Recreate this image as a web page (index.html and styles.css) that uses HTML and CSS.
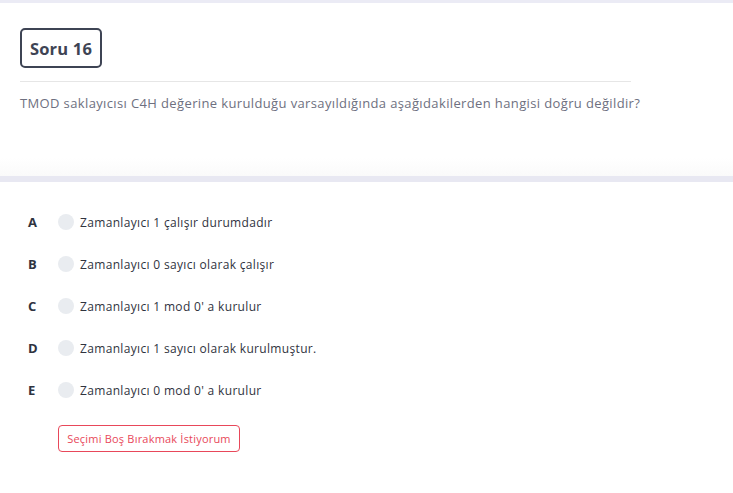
FILE: index.html
```html
<!DOCTYPE html>
<html lang="tr">
<head>
<meta charset="utf-8">
<link rel="stylesheet" href="styles.css">
</head>
<body>
<div class="topbar"></div>
<section class="question">
  <div class="badge">Soru 16</div>
  <div class="divider"></div>
  <p class="qtext">TMOD saklayıcısı C4H değerine kurulduğu varsayıldığında aşağıdakilerden hangisi doğru değildir?</p>
</section>
<div class="band"></div>
<section class="options">
  <div class="option"><span class="letter">A</span><span class="radio"></span><span class="otext">Zamanlayıcı 1 çalışır durumdadır</span></div>
  <div class="option"><span class="letter">B</span><span class="radio"></span><span class="otext">Zamanlayıcı 0 sayıcı olarak çalışır</span></div>
  <div class="option"><span class="letter">C</span><span class="radio"></span><span class="otext">Zamanlayıcı 1 mod 0' a kurulur</span></div>
  <div class="option"><span class="letter">D</span><span class="radio"></span><span class="otext">Zamanlayıcı 1 sayıcı olarak kurulmuştur.</span></div>
  <div class="option"><span class="letter">E</span><span class="radio"></span><span class="otext">Zamanlayıcı 0 mod 0' a kurulur</span></div>
  <button class="skip">Seçimi Boş Bırakmak İstiyorum</button>
</section>
</body>
</html>
```
FILE: styles.css
```css
* { box-sizing: border-box; }
html, body { margin: 0; padding: 0; background: #fff; }
body { font-family: "Open Sans", "Liberation Sans", sans-serif; width: 733px; height: 493px; overflow: hidden; }
.topbar { height: 3px; background: #ebebf5; }
.question {
  height: 173px;
  padding: 25px 102px 0 20px;
  background: linear-gradient(to bottom, #fff 0, #fff 155px, #fafafa 173px);
}
.badge {
  display: inline-flex; align-items: center; justify-content: center;
  width: 82px; height: 40px;
  border: 2px solid #3e4454; border-radius: 5px;
  font-weight: 700; font-size: 16.5px; color: #3e4454;
  letter-spacing: 0.2px;
}
.divider { height: 1px; background: #e6e6e6; margin-top: 13px; }
.qtext { margin: 12px 0 0; font-size: 13px; letter-spacing: 0.37px; color: #6e7080; line-height: 18px; white-space: nowrap; }
.band { height: 6px; background: #e8e8f2; }
.options { padding: 19px 0 0 28px; }
.option { display: flex; align-items: center; height: 42px; }
.letter { width: 30px; font-weight: 700; font-size: 13px; color: #2f3340; }
.radio { width: 16px; height: 16px; border-radius: 50%; background: #e9ecf0; margin-right: 6px; }
.otext { font-size: 12px; letter-spacing: 0.33px; color: #30333e; }
.skip {
  margin: 14px 0 0 30px; height: 27px; width: 182px;
  border: 1px solid #e8485a; border-radius: 4px; background: #fff;
  color: #e8485a; font-family: inherit; font-size: 11px; letter-spacing: 0.2px; padding: 0;
}
```
